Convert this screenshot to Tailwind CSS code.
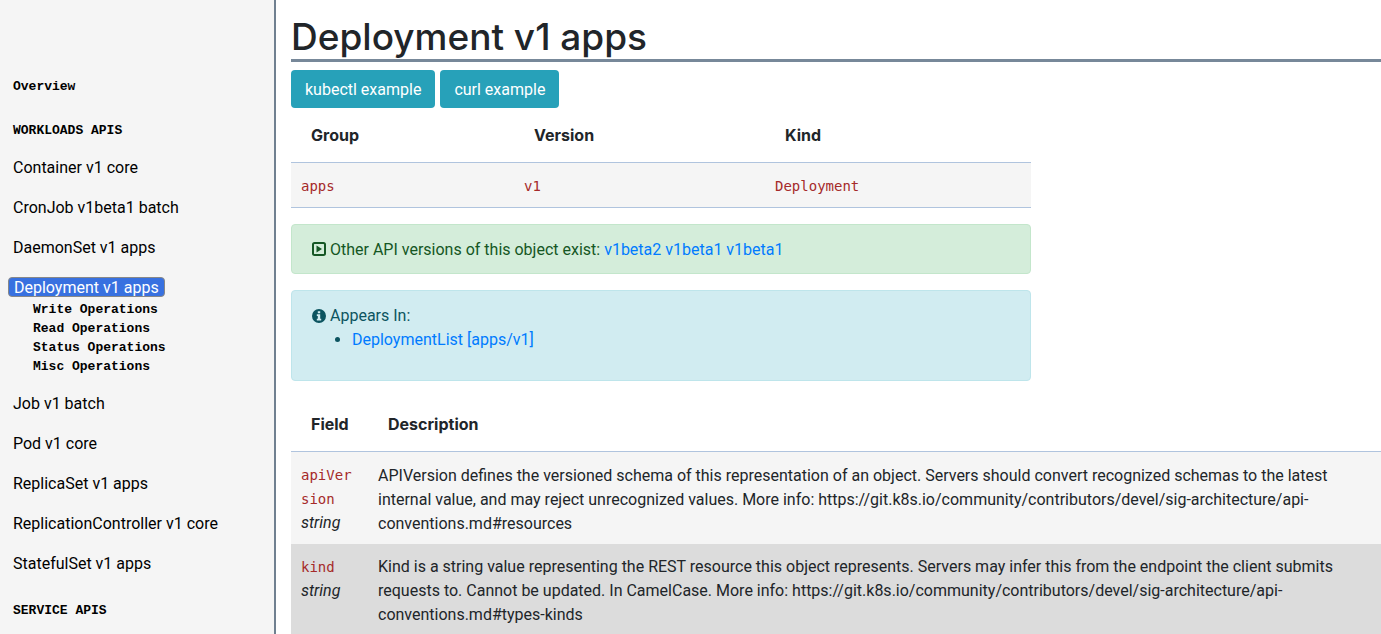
<!DOCTYPE html>
<html lang="en">
<head>
<meta charset="utf-8">
<title>Kubernetes API Reference</title>
<script src="https://cdn.jsdelivr.net/npm/@tailwindcss/browser@4"></script>
</head>
<body class="flex h-screen overflow-hidden bg-white font-[Roboto,sans-serif] text-base text-[#212529]">
<nav class="w-[276px] shrink-0 overflow-hidden border-r-2 border-[#708090] bg-[#f5f5f5] pt-[77px] text-black">
  <ul class="pl-[13px]">
    <li class="mb-6 h-5 font-['Liberation_Mono',monospace] text-[13px]/5 font-bold"><a href="#overview">Overview</a></li>
    <li class="mb-[7px] h-5 font-['Liberation_Mono',monospace] text-[13px]/5 font-bold"><a href="#workloads">WORKLOADS APIS</a></li>
    <li class="h-10 leading-10"><a href="#container">Container v1 core</a></li>
    <li class="h-10 leading-10"><a href="#cronjob">CronJob v1beta1 batch</a></li>
    <li class="h-10 leading-10"><a href="#daemonset">DaemonSet v1 apps</a></li>
    <li class="pt-[9px] pb-2">
      <a href="#deployment" class="-ml-[5px] flex h-5 w-fit items-center rounded border border-[#888888] bg-[#3871e0] px-[5px] pt-0.5 whitespace-nowrap text-white">Deployment v1 apps</a>
      <ul class="pt-[3px] pl-5 font-['Liberation_Mono',monospace] text-[13px]/[19px] font-bold">
        <li><a href="#write">Write Operations</a></li>
        <li><a href="#read">Read Operations</a></li>
        <li><a href="#status">Status Operations</a></li>
        <li><a href="#misc">Misc Operations</a></li>
      </ul>
    </li>
    <li class="h-10 leading-10"><a href="#job">Job v1 batch</a></li>
    <li class="h-10 leading-10"><a href="#pod">Pod v1 core</a></li>
    <li class="h-10 leading-10"><a href="#replicaset">ReplicaSet v1 apps</a></li>
    <li class="h-10 leading-10"><a href="#rc">ReplicationController v1 core</a></li>
    <li class="h-10 leading-10"><a href="#statefulset">StatefulSet v1 apps</a></li>
    <li class="mt-[17px] h-5 font-['Liberation_Mono',monospace] text-[13px]/5 font-bold"><a href="#service">SERVICE APIS</a></li>
  </ul>
</nav>
<main class="min-w-0 flex-1 overflow-hidden pt-3 pl-[15px]">
  <h1 class="mb-2 h-[50px] border-b-3 border-[#778899] font-[Inter,sans-serif] text-[37px]/[50px] font-medium">Deployment v1 apps</h1>
  <div class="flex gap-[5px]">
    <button type="button" class="h-[38px] rounded bg-[#27a1b9] px-[14px] pt-0.5 text-white">kubectl example</button>
    <button type="button" class="h-[38px] rounded bg-[#27a1b9] px-[14px] pt-0.5 text-white">curl example</button>
  </div>
  <table class="w-full max-w-[740px] table-fixed text-left">
    <thead class="font-[Inter,sans-serif]"><tr class="h-[54px] border-b border-[#b0c4de]"><th class="w-[223px] pl-5 font-bold">Group</th><th class="w-[251px] pl-5 font-bold">Version</th><th class="pl-5 font-bold">Kind</th></tr></thead>
    <tbody class="font-['DejaVu_Sans_Mono',monospace] text-sm text-[#a52a2a]"><tr class="h-[45px] border-b border-[#b0c4de] bg-[#f5f5f5]"><td class="pt-0.5 pl-[10px]">apps</td><td class="pt-0.5 pl-[10px]">v1</td><td class="pt-0.5 pl-[10px]">Deployment</td></tr></tbody>
  </table>
  <section class="mt-4 flex h-[50px] max-w-[740px] items-center rounded border border-[#c3e6cb] bg-[#d4edda] pl-5 text-[#155724]">
    <svg class="mr-1 size-[14px]" viewBox="0 0 14 14" fill="none" stroke="currentColor" stroke-width="2"><rect x="1" y="1" width="12" height="12" rx="1.5"/><path d="M4.5 3.6v6.8L10 7z" fill="currentColor" stroke="none"/></svg>
    <p class="pt-0.5">Other API versions of this object exist: <a href="#v1beta2" class="text-[#007bff]">v1beta2</a> <a href="#v1beta1" class="text-[#007bff]">v1beta1</a> <a href="#ext" class="text-[#007bff]">v1beta1</a></p>
  </section>
  <section class="mt-4 h-[91px] max-w-[740px] rounded border border-[#bee5eb] bg-[#d1ecf1] pt-[13px] pl-5 text-[#0c5460]">
    <p class="flex items-center"><svg class="mr-1 size-[14px]" viewBox="0 0 14 14" fill="currentColor"><path fill-rule="evenodd" d="M7 0a7 7 0 1 0 0 14A7 7 0 0 0 7 0ZM5.8 2.2h2.4v2H5.8Zm-1 3.1h3.4v4.5h1v1.6H4.8V9.8h1V6.9h-1Z"/></svg>Appears In:</p>
    <ul class="list-disc pl-10"><li><a href="#list" class="text-[#007bff]">DeploymentList [apps/v1]</a></li></ul>
  </section>
  <table class="mt-4 w-full table-fixed text-left">
    <thead class="font-[Inter,sans-serif]"><tr class="h-[55px] border-b border-[#b0c4de]"><th class="w-[77px] pl-5 font-bold">Field</th><th class="pl-5 font-bold">Description</th></tr></thead>
    <tbody class="align-top">
      <tr class="bg-[#f5f5f5]"><td class="px-[10px] pt-[11px] pb-[9px]"><code class="block font-['DejaVu_Sans_Mono',monospace] text-sm/6 break-all text-[#a52a2a]">apiVersion</code><em>string</em></td><td class="px-[10px] pt-3 pb-2">APIVersion defines the versioned schema of this representation of an object. Servers should convert recognized schemas to the latest internal value, and may reject unrecognized values. More info: https://git.k8s.io/community/contributors/devel/sig-architecture/api-conventions.md#resources</td></tr>
      <tr class="bg-[#dcdcdc]"><td class="px-[10px] pt-[11px] pb-2"><code class="block font-['DejaVu_Sans_Mono',monospace] text-sm/6 break-all text-[#a52a2a]">kind</code><em>string</em></td><td class="px-[10px] pt-[11px] pb-2">Kind is a string value representing the REST resource this object represents. Servers may infer this from the endpoint the client submits requests to. Cannot be updated. In CamelCase. More info: https://git.k8s.io/community/contributors/devel/sig-architecture/api-conventions.md#types-kinds</td></tr>
    </tbody>
  </table>
</main>
</body>
</html>
